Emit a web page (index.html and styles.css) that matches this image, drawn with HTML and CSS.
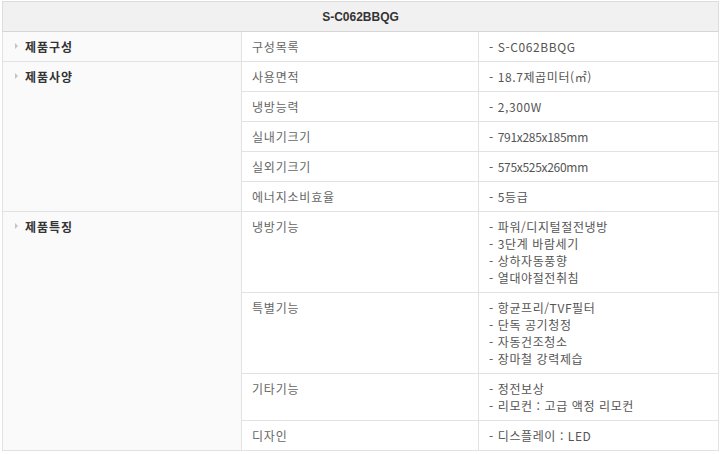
FILE: index.html
```html
<!DOCTYPE html>
<html lang="ko">
<head>
<meta charset="utf-8">
<link rel="stylesheet" href="styles.css">
</head>
<body>
<table class="spec">
  <colgroup>
    <col class="c1"><col class="c2"><col class="c3">
  </colgroup>
  <thead>
    <tr><th colspan="3" class="head">S-C062BBQG</th></tr>
  </thead>
  <tbody>
    <tr>
      <td class="cat"><span class="arrow"></span>제품구성</td>
      <td class="key">구성목록</td>
      <td class="val">- S-C062BBQG</td>
    </tr>
    <tr>
      <td class="cat" rowspan="5"><span class="arrow"></span>제품사양</td>
      <td class="key">사용면적</td>
      <td class="val">- 18.7제곱미터(㎡)</td>
    </tr>
    <tr><td class="key">냉방능력</td><td class="val">- 2,300W</td></tr>
    <tr><td class="key">실내기크기</td><td class="val">- <span class="num">791x285x185mm</span></td></tr>
    <tr><td class="key">실외기크기</td><td class="val">- <span class="num">575x525x260mm</span></td></tr>
    <tr><td class="key">에너지소비효율</td><td class="val">- 5등급</td></tr>
    <tr>
      <td class="cat" rowspan="4"><span class="arrow"></span>제품특징</td>
      <td class="key">냉방기능</td>
      <td class="val">- 파워/디지털절전냉방<br>- 3단계 바람세기<br>- 상하자동풍향<br>- 열대야절전취침</td>
    </tr>
    <tr><td class="key">특별기능</td><td class="val">- 항균프리/TVF필터<br>- 단독 공기청정<br>- 자동건조청소<br>- 장마철 강력제습</td></tr>
    <tr><td class="key">기타기능</td><td class="val">- 정전보상<br>- 리모컨 : 고급 액정 리모컨</td></tr>
    <tr><td class="key">디자인</td><td class="val">- 디스플레이 : LED</td></tr>
  </tbody>
</table>
</body>
</html>
```
FILE: styles.css
```css
html, body {
  margin: 0;
  padding: 0;
  background: #fff;
}
body {
  padding: 1px 2px 0 2px;
  font-family: "Noto Sans CJK KR", "Noto Sans", sans-serif;
  font-size: 12px;
  color: #555;
}
.spec {
  width: 716px;
  border-collapse: collapse;
  table-layout: fixed;
  border: 1px solid #dcdcdc;
}
.c1 { width: 239px; }
.c2 { width: 237px; }
.c3 { width: 240px; }
.head {
  height: 29px;
  padding: 0;
  background: #f1f1f1;
  border-bottom: 1px solid #d6d6d6;
  font-family: "Liberation Sans", "Noto Sans CJK KR", sans-serif;
  font-weight: bold;
  font-size: 12px;
  color: #333;
  text-align: center;
  vertical-align: middle;
}
td {
  padding: 6px 10px;
  line-height: 17px;
  vertical-align: top;
  border: 1px solid #e2e2e2;
}
.cat {
  background: #fafafa;
  font-weight: bold;
  color: #333;
  padding-left: 12px;
  letter-spacing: 1px;
}
.arrow {
  display: inline-block;
  width: 0;
  height: 0;
  border-left: 3px solid #c4c4c4;
  border-top: 3px solid transparent;
  border-bottom: 3px solid transparent;
  margin-right: 7px;
  vertical-align: 3px;
}
.key {
  color: #666;
  background: #fff;
  letter-spacing: 0.8px;
}
.val {
  color: #555;
  background: #fff;
  letter-spacing: 0.6px;
}
.num {
  letter-spacing: -0.3px;
}
```
